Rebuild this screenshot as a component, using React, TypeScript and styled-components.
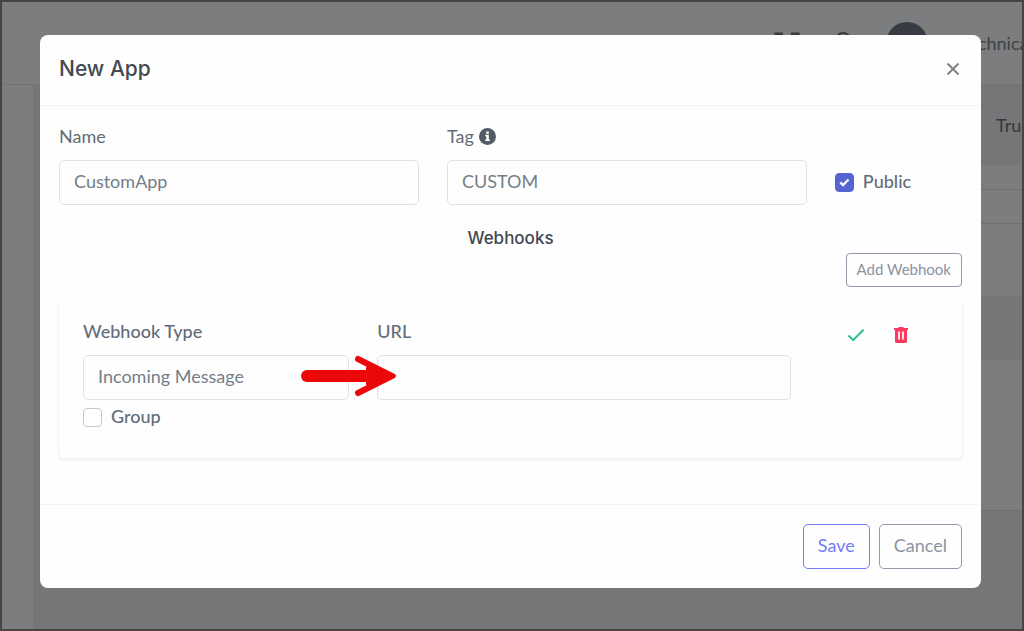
import React from 'react';
import styled, { createGlobalStyle, css } from 'styled-components';

const GlobalStyle = createGlobalStyle`
  *, *::before, *::after { box-sizing: border-box; }
  body {
    margin: 0;
    font-family: Lato, 'Open Sans', sans-serif;
    font-size: 18px;
    line-height: 24px;
    color: #626d79;
  }
  button, input, select { font: inherit; color: inherit; }
`;

const Frame = styled.div`
  position: relative;
  display: flex;
  flex-direction: column;
  min-height: 100vh;
  border: 2px solid #454545;
  overflow: hidden;
`;

const Page = styled.div`
  position: absolute;
  inset: 0;
  display: flex;
  flex-direction: column;
  background: #ebedf0;
  overflow: hidden;
`;

const TopBar = styled.header`
  display: flex;
  align-items: center;
  justify-content: flex-end;
  gap: 32px;
  height: 83px;
  flex: none;
  background: #f9fafd;
  border-bottom: 1px solid #e2e4e7;
  color: #7c828c;
`;

const Avatar = styled.span`
  width: 42px;
  height: 42px;
  border-radius: 50%;
  background: #727687;
`;

const UserName = styled.span`
  width: 62px;
  white-space: nowrap;
`;

const PageBody = styled.div`
  display: flex;
  flex: 1;
`;

const SideBar = styled.nav`
  width: 31px;
  background: #f9fafd;
`;

const Content = styled.div`
  flex: 1;
  padding-left: 24px;
`;

const Crumb = styled.div`
  display: flex;
  align-items: center;
  justify-content: flex-end;
  height: 80px;
  color: #6a6f78;

  span { width: 26px; white-space: nowrap; }
`;

const Band = styled.div<{ $height: number; $shaded?: boolean; $line?: boolean }>`
  height: ${(p) => p.$height}px;
  background: ${(p) => (p.$shaded ? '#edeff1' : '#f9fafd')};
  border-bottom: ${(p) => (p.$line ? '1px solid #dcdfe2' : '0')};
`;

const Overlay = styled.div`
  position: relative;
  flex: 1;
  padding: 33px 41px 41px 38px;
  background: rgba(0, 0, 0, 0.5);
`;

const Dialog = styled.section`
  background: #fefefe;
  border-radius: 8px;
`;

const DialogHeader = styled.header`
  display: flex;
  align-items: center;
  justify-content: space-between;
  height: 71px;
  padding: 0 19px 2px;
  border-bottom: 1px solid #f1f2f4;
`;

const Title = styled.h1`
  margin: 0;
  font: 500 21px/28px Inter, sans-serif;
  color: #424951;
`;

const IconButton = styled.button`
  display: flex;
  align-items: center;
  justify-content: center;
  width: 18px;
  height: 24px;
  padding: 0;
  border: 0;
  background: none;
  cursor: pointer;
`;

const DialogBody = styled.div`
  display: flex;
  flex-direction: column;
  padding: 18px 19px 46px;
`;

const Row = styled.div`
  display: grid;
  grid-template-columns: repeat(12, 1fr);
  column-gap: 28px;
`;

const Field = styled.div<{ $span: number }>`
  grid-column: span ${(p) => p.$span};
  display: flex;
  flex-direction: column;
  gap: 12px;
  min-width: 0;
`;

const LabelLine = styled.div`
  display: flex;
  align-items: center;
  gap: 5px;
  height: 24px;
`;

const Label = styled.label<{ $strong?: boolean }>`
  font-weight: ${(p) => (p.$strong ? 500 : 400)};
`;

const control = css`
  width: 100%;
  height: 45px;
  padding: 0 14px 3px;
  border: 1px solid #dee2e6;
  border-radius: 5px;
  background: #fefefe;
  color: #737e89;
  outline: none;
`;

const TextInput = styled.input`${control}`;
const Select = styled.select`
  ${control}
  appearance: none;
`;

const CheckLine = styled.div<{ $atEnd?: boolean }>`
  grid-column: span 2;
  display: flex;
  align-items: center;
  gap: 9px;
  height: ${(p) => (p.$atEnd ? '45px' : '26px')};
  align-self: ${(p) => (p.$atEnd ? 'end' : 'auto')};

  label { padding-bottom: 3px; }
`;

const CheckBox = styled.span`
  display: grid;
  flex: none;

  input, svg { grid-area: 1 / 1; }
  svg { place-self: center; pointer-events: none; }
`;

const CheckInput = styled.input`
  appearance: none;
  width: 19px;
  height: 19px;
  margin: 0;
  border: 1px solid #c3c7cf;
  border-radius: 4px;
  background: #fff;

  &:checked {
    border-color: #5664d2;
    background: #5664d2;
  }
`;

const SectionTitle = styled.h2`
  margin: 20px 0 2px;
  font: 500 17px/26px Inter, sans-serif;
  text-align: center;
  color: #424951;
`;

const Button = styled.button<{ $tone?: 'primary'; $small?: boolean }>`
  height: ${(p) => (p.$small ? 34 : 45)}px;
  padding: 0 ${(p) => (p.$small ? 10 : 14)}px 3px;
  border: 1px solid ${(p) => (p.$tone ? '#727cf5' : '#9499a9')};
  border-radius: ${(p) => (p.$small ? 4 : 5)}px;
  background: none;
  color: ${(p) => (p.$tone ? '#727cf5' : '#8d92a2')};
  font-size: ${(p) => (p.$small ? 15 : 18)}px;
  cursor: pointer;
`;

const AddLine = styled.div`
  display: flex;
  justify-content: flex-end;
`;

const Card = styled.div`
  margin-top: 8px;
  padding: 24px;
  border-radius: 5px;
  box-shadow: 0 2px 1px 1px #f3f4f5;
`;

const CardActions = styled.div`
  grid-column: span 2;
  display: flex;
  justify-content: center;
  gap: 27px;
  padding-top: 4px;
`;

const GroupLine = styled.div`
  margin: 4px 0;
`;

const DialogFooter = styled.footer`
  display: flex;
  justify-content: flex-end;
  gap: 9px;
  padding: 19px;
  border-top: 1px solid #f3f4f6;
`;

const Pointer = styled.svg`
  position: absolute;
  left: 298px;
  top: 352px;
  pointer-events: none;
`;

export default function App() {
  return (
    <>
      <GlobalStyle />
      <Frame>
        <Page aria-hidden="true">
          <TopBar>
            <svg width="26" height="26" viewBox="0 0 26 26" fill="none" stroke="#747984" strokeWidth="3">
              <path d="M2 9V4h7M17 4h7v5M2 17v5h7M17 22h7v-5" />
            </svg>
            <svg width="22" height="26" viewBox="0 0 22 26" fill="none" stroke="#747984" strokeWidth="2">
              <path d="M4 19V10a7 7 0 0 1 14 0v9M2 19h18M9 23h4" />
            </svg>
            <Avatar />
            <UserName>Technical</UserName>
          </TopBar>
          <PageBody>
            <SideBar />
            <Content>
              <Crumb><span>Trudesk</span></Crumb>
              <Band $height={25} $line />
              <Band $height={34} $line />
              <Band $height={72} />
              <Band $height={64} $shaded />
              <Band $height={151} $line />
            </Content>
          </PageBody>
        </Page>
        <Overlay>
          <Dialog role="dialog" aria-labelledby="dialog-title">
            <DialogHeader>
              <Title id="dialog-title">New App</Title>
              <IconButton aria-label="Close">
                <svg width="14" height="14" viewBox="0 0 14 14" stroke="#808386" strokeWidth="2">
                  <path d="M1.500 1.500l11 11M12.500 1.500l-11 11" />
                </svg>
              </IconButton>
            </DialogHeader>
            <DialogBody>
              <Row>
                <Field $span={5}>
                  <LabelLine><Label htmlFor="name">Name</Label></LabelLine>
                  <TextInput id="name" defaultValue="CustomApp" />
                </Field>
                <Field $span={5}>
                  <LabelLine>
                    <Label htmlFor="tag">Tag</Label>
                    <svg width="17" height="17" viewBox="0 0 17 17">
                      <circle cx="8.5" cy="8.5" r="8.5" fill="#525c67" />
                      <path d="M7.2 3.4h2.6v2.3H7.2zM6.3 6.8h3.5v4.6h1v1.5H6.3v-1.5h1V8.3h-1z" fill="#fff" />
                    </svg>
                  </LabelLine>
                  <TextInput id="tag" defaultValue="CUSTOM" />
                </Field>
                <CheckLine $atEnd>
                  <CheckBox>
                    <CheckInput type="checkbox" id="public" defaultChecked />
                    <svg width="11" height="9" viewBox="0 0 11 9" fill="none" stroke="#fff" strokeWidth="2.4">
                      <path d="M1.300 4.300l2.700 2.700L9.500 1.500" />
                    </svg>
                  </CheckBox>
                  <Label htmlFor="public" $strong>Public</Label>
                </CheckLine>
              </Row>
              <SectionTitle>Webhooks</SectionTitle>
              <AddLine><Button $small>Add Webhook</Button></AddLine>
              <Card>
                <Row>
                  <Field $span={4}>
                    <Label htmlFor="type" $strong>Webhook Type</Label>
                    <Select id="type"><option>Incoming Message</option></Select>
                  </Field>
                  <Field $span={6}>
                    <Label htmlFor="url" $strong>URL</Label>
                    <TextInput id="url" />
                  </Field>
                  <CardActions>
                    <IconButton aria-label="Confirm">
                      <svg width="18" height="14" viewBox="0 0 18 14" fill="none" stroke="#2bbf93" strokeWidth="2">
                        <path d="M1.500 7.500l4.700 4.700L16.500 1.700" />
                      </svg>
                    </IconButton>
                    <IconButton aria-label="Delete">
                      <svg width="14" height="16" viewBox="0 0 14 16">
                        <path fill="#fb3b60" fillRule="evenodd" d="M4.500 0h5v1H14v2h-1v11.500a1.500 1.500 0 0 1-1.500 1.500h-9A1.500 1.500 0 0 1 1 14.500V3H0V1h4.500zM4.200 4.500v8h1.700v-8zM8.100 4.500v8h1.700v-8z" />
                      </svg>
                    </IconButton>
                  </CardActions>
                </Row>
                <GroupLine>
                  <CheckLine>
                    <CheckBox><CheckInput type="checkbox" id="group" /></CheckBox>
                    <Label htmlFor="group" $strong>Group</Label>
                  </CheckLine>
                </GroupLine>
              </Card>
            </DialogBody>
            <DialogFooter>
              <Button $tone="primary">Save</Button>
              <Button>Cancel</Button>
            </DialogFooter>
          </Dialog>
          <Pointer width="100" height="44" viewBox="0 0 100 44">
            <path
              d="M58 5L92 22L58 39"
              fill="none" stroke="#ea0808" strokeWidth="6" strokeLinecap="round" strokeLinejoin="round"
            />
            <path d="M7 22H78" stroke="#ea0808" strokeWidth="12" strokeLinecap="round" />
            <path d="M68 14L94 22L68 30z" fill="#ea0808" stroke="#ea0808" strokeWidth="4" strokeLinejoin="round" />
          </Pointer>
        </Overlay>
      </Frame>
    </>
  );
}
